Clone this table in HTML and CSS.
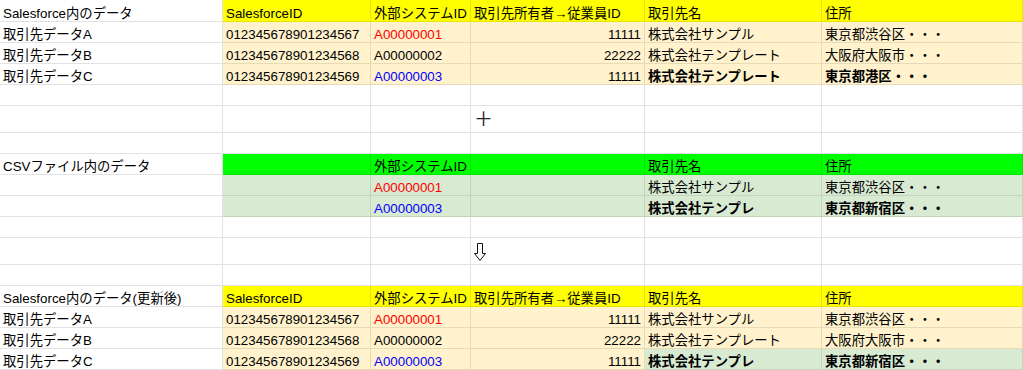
FILE: index.html
```html
<!DOCTYPE html>
<html lang="ja">
<head>
<meta charset="utf-8">
<title>Sheet</title>
<link rel="stylesheet" href="styles.css">
</head>
<body>
<table class="sheet">
  <colgroup>
    <col class="w0"><col class="w1"><col class="w2"><col class="w3"><col class="w4"><col class="w5">
  </colgroup>
  <tr class="first">
    <td>Salesforce内のデータ</td>
    <td class="y">SalesforceID</td>
    <td class="y">外部システムID</td>
    <td class="y">取引先所有者→従業員ID</td>
    <td class="y">取引先名</td>
    <td class="y">住所</td>
  </tr>
  <tr>
    <td>取引先データA</td>
    <td class="c">012345678901234567</td>
    <td class="c red">A00000001</td>
    <td class="c num">11111</td>
    <td class="c">株式会社サンプル</td>
    <td class="c">東京都渋谷区・・・</td>
  </tr>
  <tr>
    <td>取引先データB</td>
    <td class="c">012345678901234568</td>
    <td class="c">A00000002</td>
    <td class="c num">22222</td>
    <td class="c">株式会社テンプレート</td>
    <td class="c">大阪府大阪市・・・</td>
  </tr>
  <tr>
    <td>取引先データC</td>
    <td class="c">012345678901234569</td>
    <td class="c blue">A00000003</td>
    <td class="c num">11111</td>
    <td class="c b">株式会社テンプレート</td>
    <td class="c b">東京都港区・・・</td>
  </tr>
  <tr><td></td><td></td><td></td><td></td><td></td><td></td></tr>
  <tr class="tall">
    <td></td><td></td><td></td>
    <td class="mid"><span class="plus">＋</span></td>
    <td></td><td></td>
  </tr>
  <tr><td></td><td></td><td></td><td></td><td></td><td></td></tr>
  <tr>
    <td>CSVファイル内のデータ</td>
    <td class="g"></td>
    <td class="g">外部システムID</td>
    <td class="g"></td>
    <td class="g">取引先名</td>
    <td class="g">住所</td>
  </tr>
  <tr>
    <td></td>
    <td class="lg"></td>
    <td class="lg red">A00000001</td>
    <td class="lg"></td>
    <td class="lg">株式会社サンプル</td>
    <td class="lg">東京都渋谷区・・・</td>
  </tr>
  <tr>
    <td></td>
    <td class="lg"></td>
    <td class="lg blue">A00000003</td>
    <td class="lg"></td>
    <td class="lg b">株式会社テンプレ</td>
    <td class="lg b">東京都新宿区・・・</td>
  </tr>
  <tr><td></td><td></td><td></td><td></td><td></td><td></td></tr>
  <tr class="tall">
    <td></td><td></td><td></td>
    <td class="mid"><svg class="arrow" width="12" height="18" viewBox="0 0 12 18"><path d="M3.5 0.5 H8.5 V10.5 H11.5 L6 17.5 L0.5 10.5 H3.5 Z" fill="#fff" stroke="#111" stroke-width="1"/></svg></td>
    <td></td><td></td>
  </tr>
  <tr><td></td><td></td><td></td><td></td><td></td><td></td></tr>
  <tr>
    <td>Salesforce内のデータ(更新後)</td>
    <td class="y">SalesforceID</td>
    <td class="y">外部システムID</td>
    <td class="y">取引先所有者→従業員ID</td>
    <td class="y">取引先名</td>
    <td class="y">住所</td>
  </tr>
  <tr>
    <td>取引先データA</td>
    <td class="c">012345678901234567</td>
    <td class="c red">A00000001</td>
    <td class="c num">11111</td>
    <td class="c">株式会社サンプル</td>
    <td class="c">東京都渋谷区・・・</td>
  </tr>
  <tr>
    <td>取引先データB</td>
    <td class="c">012345678901234568</td>
    <td class="c">A00000002</td>
    <td class="c num">22222</td>
    <td class="c">株式会社テンプレート</td>
    <td class="c">大阪府大阪市・・・</td>
  </tr>
  <tr>
    <td>取引先データC</td>
    <td class="c">012345678901234569</td>
    <td class="c blue">A00000003</td>
    <td class="c num">11111</td>
    <td class="lg b">株式会社テンプレ</td>
    <td class="lg b">東京都新宿区・・・</td>
  </tr>
</table>
</body>
</html>
```
FILE: styles.css
```css
html, body {
  margin: 0;
  padding: 0;
  background: #fff;
}
.sheet {
  border-collapse: separate;
  border-spacing: 0;
  table-layout: fixed;
  width: 1023px;
  font-family: "Liberation Sans", "Noto Sans CJK JP", sans-serif;
  font-size: 13.33px;
  color: #000;
}
.w0 { width: 223px; }
.w1 { width: 148px; }
.w2 { width: 100px; }
.w3 { width: 174px; }
.w4 { width: 177px; }
.w5 { width: 201px; }
.sheet tr { height: 21px; }
.sheet tr.first { height: 22px; }
.sheet tr.tall { height: 27px; }
.sheet td {
  box-sizing: border-box;
  border-right: 1px solid #e2e2e2;
  border-bottom: 1px solid #e2e2e2;
  padding: 0 3px 0 3px;
  line-height: 15px;
  vertical-align: bottom;
  white-space: nowrap;
  overflow: hidden;
}
.sheet td.y {
  background: #ffff00;
  border-color: #e6e600;
}
.sheet td.c {
  background: #fff2cc;
  border-color: #e6dbb8;
}
.sheet td.g {
  background: #00ff00;
  border-color: #00e600;
}
.sheet td.lg {
  background: #d9ead3;
  border-color: #c3d3be;
}
.red { color: #ff0000; }
.blue { color: #0000ff; }
.b { font-weight: bold; }
.num { text-align: right; }
.sheet td.mid {
  vertical-align: middle;
  line-height: 20px;
  overflow: visible;
  padding-top: 1px;
}
.plus {
  font-family: "Noto Sans CJK JP", sans-serif;
  font-size: 19px;
  color: #222;
}
.arrow {
  display: block;
  margin-left: 0;
}
```
